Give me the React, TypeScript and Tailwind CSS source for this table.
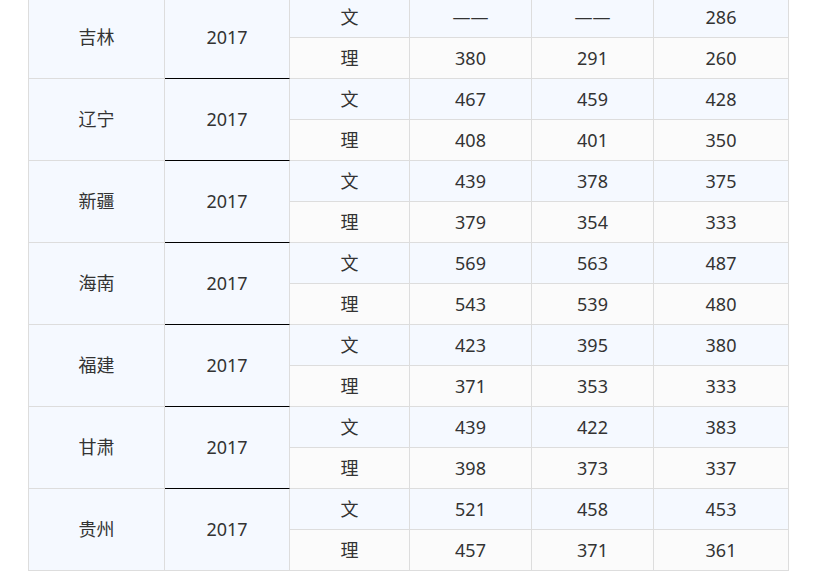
const rows: { province: string; year: string; wen: string[]; li: string[] }[] = [
  { province: '吉林', year: '2017', wen: ['——', '——', '286'], li: ['380', '291', '260'] },
  { province: '辽宁', year: '2017', wen: ['467', '459', '428'], li: ['408', '401', '350'] },
  { province: '新疆', year: '2017', wen: ['439', '378', '375'], li: ['379', '354', '333'] },
  { province: '海南', year: '2017', wen: ['569', '563', '487'], li: ['543', '539', '480'] },
  { province: '福建', year: '2017', wen: ['423', '395', '380'], li: ['371', '353', '333'] },
  { province: '甘肃', year: '2017', wen: ['439', '422', '383'], li: ['398', '373', '337'] },
  { province: '贵州', year: '2017', wen: ['521', '458', '453'], li: ['457', '371', '361'] },
];

const cell = 'flex items-center justify-center border-r border-b border-[#dddddd]';

export default function App() {
  return (
    <div
      className="min-h-[576px] overflow-hidden bg-white text-[18px] text-[#333333]"
      style={{ fontFamily: '"Noto Sans", "Noto Sans CJK SC", sans-serif' }}
    >
      <div className="ml-[28px] mt-[-4px] grid w-[761px] grid-cols-[136px_125px_120px_122px_122px_135px] auto-rows-[41px] border-l border-t border-[#dddddd]">
        {rows.map((r, i) => {
          const last = i === rows.length - 1;
          return [
            <div key={`${i}-p`} className={`${cell} row-span-2 bg-[#f5f9ff]`}>
              {r.province}
            </div>,
            <div
              key={`${i}-y`}
              className={`flex items-center justify-center border-r border-b border-r-[#dddddd] bg-[#f5f9ff] row-span-2 ${
                last ? 'border-b-[#dddddd]' : 'border-b-black'
              }`}
            >
              {r.year}
            </div>,
            <div key={`${i}-w`} className={`${cell} bg-[#f5f9ff]`}>
              文
            </div>,
            ...r.wen.map((v, j) => (
              <div key={`${i}-w${j}`} className={`${cell} bg-[#f5f9ff]`}>
                {v}
              </div>
            )),
            <div key={`${i}-l`} className={`${cell} bg-[#fbfbfb]`}>
              理
            </div>,
            ...r.li.map((v, j) => (
              <div key={`${i}-l${j}`} className={`${cell} bg-[#fbfbfb]`}>
                {v}
              </div>
            )),
          ];
        })}
      </div>
    </div>
  );
}
